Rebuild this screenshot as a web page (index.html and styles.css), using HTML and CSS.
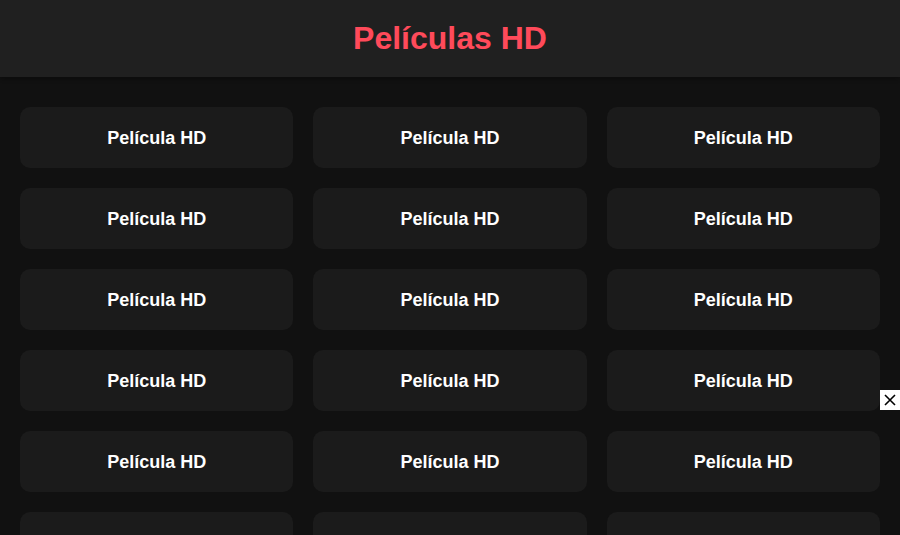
FILE: index.html
```html
<!DOCTYPE html>
<html lang="es">
<head>
<meta charset="utf-8">
<title>Películas HD</title>
<link rel="stylesheet" href="styles.css">
</head>
<body>
<header class="header"><h1 class="title">Películas HD</h1></header>
<main class="grid">
  <div class="card">Película HD</div>
  <div class="card">Película HD</div>
  <div class="card">Película HD</div>
  <div class="card">Película HD</div>
  <div class="card">Película HD</div>
  <div class="card">Película HD</div>
  <div class="card">Película HD</div>
  <div class="card">Película HD</div>
  <div class="card">Película HD</div>
  <div class="card">Película HD</div>
  <div class="card">Película HD</div>
  <div class="card">Película HD</div>
  <div class="card">Película HD</div>
  <div class="card">Película HD</div>
  <div class="card">Película HD</div>
  <div class="card">Película HD</div>
  <div class="card">Película HD</div>
  <div class="card">Película HD</div>
</main>
<button class="close" aria-label="Cerrar"><svg width="12" height="12" viewBox="0 0 12 12"><path d="M1 1L11 11M11 1L1 11" stroke="#000" stroke-width="1.6"/></svg></button>
</body>
</html>
```
FILE: styles.css
```css
html, body { margin: 0; padding: 0; }
body {
  background: #111111;
  font-family: "Liberation Sans", Arial, sans-serif;
  color: #fff;
  overflow: hidden;
}
.header {
  background: #202020;
  height: 77px;
  display: flex;
  align-items: center;
  justify-content: center;
  box-shadow: 0 2px 4px rgba(0,0,0,0.3);
}
.title {
  margin: 0;
  color: #ff4a5a;
  font-size: 32px;
  font-weight: bold;
}
.grid {
  display: grid;
  grid-template-columns: repeat(3, 1fr);
  gap: 20px;
  padding: 30px 20px;
}
.card {
  background: #1b1b1b;
  border-radius: 10px;
  height: 61px;
  box-sizing: border-box;
  padding-top: 2px;
  display: flex;
  align-items: center;
  justify-content: center;
  font-size: 18px;
  font-weight: bold;
}
.close {
  position: fixed;
  right: 0;
  top: 390px;
  width: 20px;
  height: 20px;
  padding: 0;
  border: 0;
  background: #fff;
  display: flex;
  align-items: center;
  justify-content: center;
}
```
